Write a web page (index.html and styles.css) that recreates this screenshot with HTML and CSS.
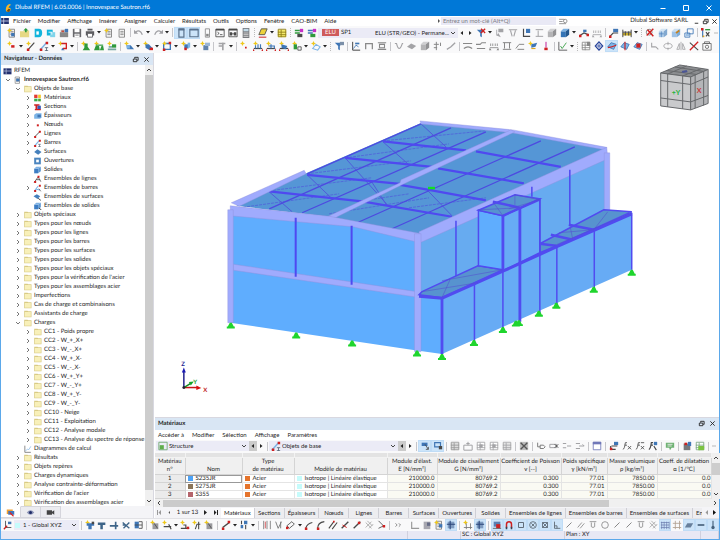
FILE: index.html
```
<!DOCTYPE html>
<html lang="fr">
<head>
<meta charset="utf-8">
<meta name="viewport" content="width=device-width, initial-scale=1">
<title>Dlubal RFEM | 6.05.0006 | Innovespace Sautron.rf6</title>
<link rel="stylesheet" href="styles.css">
</head>
<body>
<div class="app">
  <header class="titlebar">
    <svg class="logo" viewBox="0 0 10 12"><path d="M6 0Q1 3 1 8a3.500 3.500 0 0 0 3.500 4Q8 12 8.500 8 8 5 5 6 5 3 9 1z" fill="#f5b62b"/><path d="M5 7l3 1-2 4-4-1z" fill="#7a4a12"/></svg>
    <span class="title">Dlubal RFEM | 6.05.0006 | Innovespace Sautron.rf6</span>
    <button class="win" aria-label="Réduire"><svg viewBox="0 0 8 8"><path d="M1.500 4.500h5"/></svg></button>
    <button class="win" aria-label="Agrandir"><svg viewBox="0 0 8 8"><path d="M1.500 1.500h5v5h-5z"/></svg></button>
    <button class="win" aria-label="Fermer"><svg viewBox="0 0 8 8"><path d="M1.500 1.500l5 5m0-5l-5 5"/></svg></button>
  </header>

  <nav class="menubar">
    <svg class="app-icon" viewBox="0 0 9 7"><path d="M0 0h9v7H0z" fill="#23306f"/><path d="M0 3.500h9M3 0v7" stroke="#c8cfe8"/></svg>
    <button>Fichier</button><button>Modifier</button><button>Affichage</button><button>Insérer</button><button>Assigner</button><button>Calculer</button><button>Résultats</button><button>Outils</button><button>Options</button><button>Fenêtre</button><button>CAO-BIM</button><button>Aide</button>
    <span class="grow3"></span>
    <svg class="tiny" viewBox="0 0 4 4"><path d="M1 0l2 2-2 2z" fill="#555"/></svg>
    <input class="search" type="text" placeholder="Entrez un mot-clé (Alt+Q)" aria-label="Entrez un mot-clé">
    <svg class="find" viewBox="0 0 10 8"><path d="M0 1.500h6M0 4h4M0 6.500h8" stroke="#888" fill="none"/><circle cx="7" cy="3.500" r="2" stroke="#888" fill="none"/></svg>
    <span class="grow2"></span>
    <span class="company">Dlubal Software SARL</span>
    <button class="mdi" aria-label="Réduire la vue"><svg viewBox="0 0 8 8"><path d="M2 6h4"/></svg></button>
    <button class="mdi" aria-label="Restaurer la vue"><svg viewBox="0 0 8 8"><path d="M1.500 3.500h4v3h-4zM3 3V1.500h4V5H6"/></svg></button>
    <button class="mdi" aria-label="Fermer la vue"><svg viewBox="0 0 8 8"><path d="M1.500 1.500l5 5m0-5l-5 5"/></svg></button>
  </nav>

  <div class="bar" role="toolbar">
    <span class="tools" data-tools="new open logo cloud box save print v report doc | undo v redo v | *panel *panelw panelg console manager calc : para v sheet : loadA loadB"></span>
    <span class="combo case"><b class="badge">ELU</b><span class="sp">SP1</span><select aria-label="Situation de projet"><option>ELU (STR/GEO) - Permane...</option></select><svg class="chev" viewBox="0 0 6 4"><path d="M1 1l2 2 2-2"/></svg></span>
    <span class="tools" data-tools="<prev <next filterx v loadg barsg axisb loadp cubeg cubeb v rail spang | railb gauge v : zoomx ghost hand cubes | axes <more"></span>
  </div>
  <div class="bar second" role="toolbar">
    <span class="tools" data-tools="node v line member v frame v | support supports springs | surf v solid v opening v cut v block | pillar v | starred memA memB memC nodeL v plane v : filter | graph portal matrix | curve meshg cubeg arrowsg slopeg | wave wave2 span1 span2 span3 starb pin | check v : gridg target *discA discB discC | flipg ring mirrorg crossr cam"></span>
  </div>

  <div class="work">
    <aside class="navigator">
      <div class="pane-title"><span>Navigateur - Données</span>
        <button class="mdi" aria-label="Détacher"><svg viewBox="0 0 8 8"><path d="M1.500 3.500h4v3h-4zM3 3V1.500h4V5H6"/></svg></button>
        <button class="mdi" aria-label="Fermer"><svg viewBox="0 0 8 8"><path d="M1.500 1.500l5 5m0-5l-5 5"/></svg></button>
      </div>
      <div class="tree-wrap">
        <ul class="tree" id="tree"></ul>
        <div class="vscroll"><svg viewBox="0 0 6 4"><path d="M1 3l2-2 2 2"/></svg><i class="thumb"></i><svg viewBox="0 0 6 4"><path d="M1 1l2 2 2-2"/></svg></div>
      </div>
      <div class="nav-tabs">
        <button class="on" aria-label="Données"><svg viewBox="0 0 12 12"><path d="M1 2h8v6H1z" fill="#f0a030"/><path d="M3 4h8v5H3z" fill="#4277bd"/><path d="M5 6l5 5" stroke="#d22" stroke-width="1.500"/></svg></button>
        <button aria-label="Afficher"><svg viewBox="0 0 12 12"><path d="M1 6q5-6 10 0-5 6-10 0z" fill="#8b93b5"/><circle cx="6" cy="6" r="2" fill="#1d2a66"/></svg></button>
        <button aria-label="Vues"><svg viewBox="0 0 12 12"><path d="M1 3h7v6H1zM8 5l3-2v6L8 7z" fill="#444"/></svg></button>
      </div>
    </aside>

    <div class="main">
      <section class="view">
        <svg class="model" viewBox="155 53 565 364">
          <g>
            <path d="M421 240L609 156V232L421 297z" fill="#67abf0"/>
            <path d="M231 212L352 226 421 240V351.500L231 323z" fill="#5fadfe"/>
            <path d="M418 292L443 298V354.500L418 351z" fill="#5fadfe"/>
            <path d="M443 298L504 271 558 247 595 230 633 213V270L443 354.500z" fill="#67abf5"/>
            <path d="M237 206L308 173 422 123 515 132 606 149 421 236 330 217z" fill="#5596d6"/>
          </g>
          <g stroke="#4f4cdc" stroke-width="1" fill="none" opacity=".8">
            <path d="M270 192L293 212M308 175L333 199M346 158L390 207M384 142L410 165M422 124L447 147M428 190L453 216M372 181L388 206"/>
            <path d="M240 208L340 194M270 191L372 178M308 174L412 161M346 158L450 144M384 141L486 131M330 214L430 198M410 208L487 198M363 201L410 194" stroke-dasharray="3 1" opacity=".7"/>
          </g>
          <g stroke="#4d4ae0" stroke-width="1.300" fill="none">
            <path d="M270 209L452 128M303 213L487 132M358 223L542 141M393 229L576 147M308 174L422 124"/>
          </g>
          <g stroke="#4f49f0" stroke-width="2.200" fill="none">
            <path d="M270 191.500L363 201.500 453 217M308 175L401 184M401 185L430 190 487 200.500M346 158L438 167.500M439 168.500L525 183.500M384 141.500L467 150.500M477 151.500L562 167"/>
          </g>
          <g fill="#a0abfd" stroke="#8f90dc" stroke-width=".4">
            <path d="M232 203L305 170.500 307 174 240 206.500z"/>
            <path d="M421 121L514 130 608 147.500 606 150 514 133 422 124z"/>
            <path d="M328 217L401 183 402 180 512 130 516 132 405 184 336 218z"/>
            <path d="M231 206L330 216.500 420 233.500 421 243 354 227 231 216z"/>
            <path d="M420 232L608 147.500 609 159 421 243z"/>
            <path d="M234 264.500L418 292V297.500L234 270.500z"/>
            <path d="M228.500 210h5.500V323h-5.500zM415.500 234h6.500V352h-6.500zM605.500 153h5.500V211h-5.500z"/>
          </g>
          <path d="M296.500 218V277M352.500 226V285" stroke="#4f49f0" stroke-width="2"/>
          <path d="M457 221V277M571 170V226M533 187V197" stroke="#4f49f0" stroke-width="1.500"/>
          <g stroke="#514bf0" stroke-width="1.500">
            <path d="M423 292L479 266 504 270 443 298 420 295z" fill="#5793cf"/>
            <path d="M541 244L605 210 633 212 558 246 541 253z" fill="#5793cf"/>
            <path d="M479.500 210.500L504 216V270L479.500 266z" fill="#5fadfe"/>
            <path d="M504 216L541 199V253L504 271z" fill="#67abf5"/>
            <path d="M479.500 210.500L516 195 541 199 504 216z" fill="#5793cf"/>
          </g>
          <g stroke="#514bf0" fill="none">
            <path d="M420 296.500L443 298.500 504 271.500 558 247 633 214" stroke-width="3"/>
            <path d="M443 298V354.500M521 208V322M504 216V271" stroke-width="2.800"/>
            <path d="M475.500 285V344M504 271V331M541 199V315M558 246V306M595.500 231V289M633 213V270" stroke-width="1.500"/>
            <path d="M494 202L521 208M552 235L574 240M541 244L557 246M570 225L595 230M504 216L541 199.500" stroke-width="2.500"/>
          </g>
          <path d="M451 280L443 298M443 281L504 270M423 292L479 283M480 210L521 208M494 202L504 216M516 195L541 200M516 195V205M510 209L541 200M571 225L574 240M555 246L633 213M595 230L609 212M560 233L595 230" stroke="#5350d0" stroke-width=".7" fill="none" opacity=".8"/>
          <g id="supports" fill="#1fd52d"></g>
          <path d="M429 187h7v2.500h-7z" fill="#12e020"/>
          <path d="M184.500 388V372" stroke="#23238c" stroke-width="1.500"/><path d="M182.500 373l2-5 2 5z" fill="#1a1ab4"/>
          <path d="M184.500 388H199" stroke="#c81414" stroke-width="1.500"/><path d="M197 386l5 2.500-5 2z" fill="#d81010"/>
          <path d="M184.500 388L191 384" stroke="#118a22" stroke-width="1.500"/><path d="M189.500 382.500l5-.500-3 4z" fill="#14a52a"/>
          <circle cx="184.500" cy="388" r="1.500" fill="#223"/>
          <g class="axis-text"><text x="182" y="366" fill="#1c1c90">Z</text><text x="204" y="392" fill="#c01818">X</text><text x="194" y="384" fill="#18a030">Y</text></g>
          <g stroke="#66686b" stroke-width="1">
            <path d="M662 73L681 65 709.500 69.500 692 77z" fill="#8b8d90"/>
            <path d="M662 73L692 77V110L662 106z" fill="#c9cacc"/>
            <path d="M692 77L709.500 69.500V103.500L692 110z" fill="#b4b5b8"/>
            <path d="M669 74V107M684 76V109M662 80.500L692 84.500 709.500 77M662 98L692 102 709.500 95.500M696.500 75V108M705 71.500V105.500M668 70.500L698 74.500M676 67L705 71.500M669 74L688 66M684 76L703 68.500" fill="none"/>
          </g>
          <g class="cube-text"><text x="673" y="95" fill="#22b43a">+Y</text><text x="698" y="93" fill="#c83a3a">X</text></g>
          <path d="M683 71l5-1 1 2-5 1z" fill="#4b5596"/>
        </svg>
      </section>

      <section class="panel">
        <div class="pane-title"><span>Matériaux</span>
          <button class="mdi" aria-label="Détacher"><svg viewBox="0 0 8 8"><path d="M1.500 3.500h4v3h-4zM3 3V1.500h4V5H6"/></svg></button>
          <button class="mdi" aria-label="Fermer"><svg viewBox="0 0 8 8"><path d="M1.500 1.500l5 5m0-5l-5 5"/></svg></button>
        </div>
        <div class="panel-menu"><button>Accéder à</button><button>Modifier</button><button>Sélection</button><button>Affichage</button><button>Paramètres</button></div>
        <div class="bar panel-bar" role="toolbar">
          <span class="combo structure"><span class="ico" data-icon="green"></span><select aria-label="Catégorie"><option>Structure</option></select><svg class="chev" viewBox="0 0 6 4"><path d="M1 1l2 2 2-2"/></svg></span>
          <span class="tools" data-tools="#prev <next |"></span>
          <span class="combo objects"><span class="ico" data-icon="member"></span><select aria-label="Type d'objet"><option>Objets de base</option></select><svg class="chev" viewBox="0 0 6 4"><path d="M1 1l2 2 2-2"/></svg></span>
          <span class="tools" data-tools="#prev <next | *selA *selB | rowg rowup tabgr tabgr tabgl | delg | tagg delrow insg outg | tabb | exch fx fxx fxp | bubble | binder excel | <more"></span>
        </div>
        <div class="grid-wrap">
          <table>
            <colgroup><col class="c30"><col class="c57"><col class="c52"><col class="c93"><col class="c50"><col class="c63"><col class="c61"><col class="c46"><col class="c50"><col class="c54"></colgroup>
            <thead>
              <tr class="strip"><td></td><td></td><td></td><td></td><td></td><td></td><td></td><td></td><td></td><td></td></tr>
              <tr><th>Matériau<br>n°</th><th><br>Nom</th><th>Type<br>de matériau</th><th><br>Modèle de matériau</th><th>Module d'élast.<br>E [N/mm²]</th><th>Module de cisaillement<br>G [N/mm²]</th><th>Coefficient de Poisson<br>v [--]</th><th>Poids spécifique<br>γ [kN/m³]</th><th>Masse volumique<br>ρ [kg/m³]</th><th>Coeff. de dilatation<br>α [1/°C]</th></tr>
            </thead>
            <tbody>
              <tr><th>1</th><td class="sel"><i class="sw blue"></i>S235JR</td><td><i class="sw orange"></i>Acier</td><td><i class="sw cyan"></i>Isotrope | Linéaire élastique</td><td>210000.0</td><td>80769.2</td><td>0.300</td><td>77.01</td><td>7850.00</td><td class="cutoff">0.0</td></tr>
              <tr><th>2</th><td><i class="sw brown"></i>S275JR</td><td><i class="sw orange"></i>Acier</td><td><i class="sw cyan"></i>Isotrope | Linéaire élastique</td><td>210000.0</td><td>80769.2</td><td>0.300</td><td>77.01</td><td>7850.00</td><td class="cutoff">0.0</td></tr>
              <tr><th>3</th><td><i class="sw rose"></i>S355</td><td><i class="sw orange"></i>Acier</td><td><i class="sw cyan"></i>Isotrope | Linéaire élastique</td><td>210000.0</td><td>80769.2</td><td>0.300</td><td>77.01</td><td>7850.00</td><td class="cutoff">0.0</td></tr>
            </tbody>
          </table>
          <div class="vscroll short"><svg viewBox="0 0 6 4"><path d="M1 3l2-2 2 2"/></svg><i class="thumb"></i><svg viewBox="0 0 6 4"><path d="M1 1l2 2 2-2"/></svg></div>
        </div>
        <div class="hscroll"><svg viewBox="0 0 4 6"><path d="M3 1L1 3l2 2"/></svg><i class="thumb"></i><i class="rest"></i><svg viewBox="0 0 4 6"><path d="M1 1l2 2-2 2"/></svg></div>
        <div class="tabs">
          <span class="pager"><button aria-label="Premier"><svg viewBox="0 0 5 5"><path d="M1 0v5H0V0zM4 0v5L1.500 2.500z" fill="#999"/></svg></button><button aria-label="Précédent"><svg viewBox="0 0 5 5"><path d="M3 1v3L1.500 2.500z" fill="#555"/></svg></button><span>1 sur 13</span><button aria-label="Suivant"><svg viewBox="0 0 5 5"><path d="M1 0v5l3-2.500z" fill="#222"/></svg></button><button aria-label="Dernier"><svg viewBox="0 0 5 5"><path d="M4 0v5h1V0zM1 0v5l2.500-2.500z" fill="#222"/></svg></button></span>
          <div class="tablist"><button class="on">Matériaux</button><button>Sections</button><button>Épaisseurs</button><button>Nœuds</button><button>Lignes</button><button>Barres</button><button>Surfaces</button><button>Ouvertures</button><button>Solides</button><button>Ensembles de lignes</button><button>Ensembles de barres</button><button>Ensembles de surfaces</button><button>Ensembles de solides</button></div>
          <span class="tab-arrows"><button aria-label="Onglets précédents"><svg viewBox="0 0 5 5"><path d="M4 0v5L1.500 2.500z" fill="#999"/></svg></button><button aria-label="Onglets suivants"><svg viewBox="0 0 5 5"><path d="M1 0v5l3-2.500z" fill="#111"/></svg></button></span>
        </div>
      </section>
    </div>
  </div>

  <div class="bar bottom" role="toolbar">
    <span class="tools" data-tools="csys"></span>
    <span class="combo global"><i class="sw cyan"></i><select aria-label="Système de coordonnées"><option>1 - Global XYZ</option></select><svg class="chev" viewBox="0 0 6 4"><path d="M1 1l2 2 2-2"/></svg></span>
    <span class="tools narrow" data-tools="| wpA wpB wpC wpD wpE | wpF dimA v dimB dimC wpF | dash v sortb v | bars3 curve2 para2 v slash arc dbl slash2 slash3 hatchg angle | more gap angleg pageg pager *eyeb | stargrid *eyeb | *mag *magnet *sq *circ *xsq *perp slashg dblg cupg ringg slashg slashg cupg hatchg *grid hash *planeb *dashb *tempb"></span>
  </div>
  <footer class="status"><span class="s1"></span><span class="s2"></span><span class="s3">SC : Global XYZ</span><span class="s4">Plan : XY</span><span class="s5"></span></footer>
</div>
<script src="app.js"></script>
</body>
</html>
```
FILE: styles.css
```
* { box-sizing: border-box; }
html, body { margin: 0; height: 100%; }
body {
  font-family: Lato, "Open Sans", sans-serif;
  font-size: 6px;
  line-height: 8px;
  color: #262626;
  text-rendering: geometricPrecision;
  overflow: hidden;
}
button, input, select { font: inherit; color: inherit; border: 0; margin: 0; padding: 0; background: none; border-radius: 0; }
button { display: inline-flex; align-items: center; justify-content: center; white-space: nowrap; }
svg { display: block; }

.app {
  min-height: 100vh;
  height: 100%;
  display: flex;
  flex-direction: column;
  background: #f9f9fa;
  border: 1px solid #5ba8ea;
  border-top: 0;
}

.titlebar { flex: none; height: 16px; margin: 0 -1px; display: flex; align-items: center; background: #0078d7; color: #fff; }
.titlebar .logo { width: 7px; height: 8px; margin: 0 3px 0 5px; }
.titlebar .title { flex: 1; }
.win { width: 23px; height: 16px; }
.win svg { width: 8px; height: 8px; }
.win path { stroke: #fff; stroke-width: 1; fill: none; }

.menubar { flex: none; height: 10px; display: flex; align-items: center; background: #fff; }
.menubar > button { margin-right: 7px; }
.app-icon { width: 8px; height: 6px; margin-right: 4px; }
.grow3 { flex: 3; }
.grow2 { flex: 2; }
.tiny { width: 4px; height: 4px; }
.search { flex: 0 1 115px; min-width: 0; height: 8px; background: #e9e9f5; padding-left: 2px; }
.search::placeholder { color: #7d7d86; opacity: 1; }
.find { width: 9px; height: 7px; margin-left: 3px; }
.company { margin-right: 4px; }
.menubar > .mdi { margin: 0; }
.mdi { width: 9px; height: 8px; }
.mdi svg { width: 7px; height: 7px; }
.mdi path { stroke: #222; stroke-width: 1; fill: none; }

.bar { flex: none; height: 13px; display: flex; align-items: center; background: #f9f9fa; overflow: hidden; padding-left: 4px; }
.second { height: 14px; }
.tools { display: flex; align-items: center; flex: none; }
.tool { width: 13px; height: 12px; }
.tool svg, .ico svg { width: 10px; height: 10px; }
.tool.on { background: #cce4f9; box-shadow: inset 0 0 0 1px #bfdcf6; }
.tool.arrow { width: 8px; }
.tool.arrow svg { width: 6px; height: 6px; }
.tool.arrow.grey { background: #cbcbcb; height: 10px; }
.drop { width: 6px; height: 12px; }
.drop svg { width: 4px; height: 3px; }
.sep { width: 4px; height: 9px; background: linear-gradient(#c6c6ca, #c6c6ca) center / 1px 100% no-repeat; }
.sep.grip { background: repeating-linear-gradient(#bbb 0 1px, transparent 1px 2px) center / 1px 100% no-repeat; }
.gap { width: 5px; }
.narrow .tool { width: 12px; }
.narrow .sep { width: 5px; }

.combo { display: flex; align-items: center; height: 10px; background: #ebebf6; flex: none; }
.combo select { appearance: none; flex: 1; min-width: 0; height: 10px; line-height: 10px; }
.chev { width: 6px; height: 4px; margin-right: 2px; flex: none; }
.chev path, .vscroll path, .hscroll path { stroke: #444; stroke-width: 1; fill: none; }
.case { width: 140px; }
.case select { overflow: visible; }
.badge { width: 17px; height: 7px; line-height: 7px; margin-left: 4px; background: #cf5b5b; color: #fff; font-weight: 400; text-align: center; }
.sp { width: 36px; padding-left: 2px; }

.work { flex: 1; min-height: 0; display: flex; background: #fff; }
.navigator { flex: 0 0 153px; display: flex; flex-direction: column; background: #f4f4f7; border-right: 1px solid #d8d8e0; }
.pane-title { flex: none; height: 12px; display: flex; align-items: center; background: #d9e6f4; padding: 0 1px 0 3px; font-weight: 700; }
.pane-title span { flex: 1; }
.pane-title .mdi { width: 11px; }
.tree-wrap { flex: 1; min-height: 0; display: flex; background: #fff; }
.tree { flex: 1; min-width: 0; margin: 0; padding: 1px 0 0; list-style: none; overflow: hidden; }
.tree li { height: 9px; line-height: 9px; display: flex; align-items: center; white-space: nowrap; }
.tree .chevron { width: 11px; height: 9px; display: flex; align-items: center; justify-content: center; flex: none; }
.tree .chevron svg { width: 6px; height: 6px; }
.tree .chevron path { stroke: #777; stroke-width: 1; fill: none; }
.tree .icon { width: 9px; height: 8px; margin-right: 2px; flex: none; }
.tree .lv0 { padding-left: 1px; }
.tree .lv1 { padding-left: 11px; }
.tree .lv2 { padding-left: 21px; }
.tree .root { padding-left: 2px; }
.tree .strong { font-weight: 700; }

.vscroll { flex: 0 0 8px; display: flex; flex-direction: column; align-items: center; background: #f0f0f0; }
.vscroll svg { width: 6px; height: 4px; margin: 3px 0; flex: none; }
.vscroll .thumb { width: 8px; flex: 0 1 94%; background: #cdcdcd; margin-bottom: auto; }
.nav-tabs { flex: none; height: 12px; display: flex; background: #f4f4f7; }
.nav-tabs button { width: 20px; border: 1px solid #d5d5dc; border-width: 1px 1px 1px 0; background: #ececf0; }
.nav-tabs .on { background: #fff; border-top-color: #fff; }
.nav-tabs svg { width: 9px; height: 9px; }

.main { flex: 1; min-width: 0; display: flex; flex-direction: column; }
.view { flex: 1; min-height: 0; background: #fff; }
.model { width: 100%; height: 100%; }
.axis-text { font-size: 6px; font-weight: 700; }
.cube-text { font-size: 7px; font-weight: 700; }

.panel { flex: none; margin-left: 1px; border-top: 1px solid #d8d8e0; background: #f9f9fa; }
.panel-menu { height: 10px; display: flex; align-items: center; gap: 8px; padding-left: 3px; background: #fff; }
.panel-bar { padding-left: 1px; }
.structure { width: 93px; }
.objects { width: 129px; }
.ico { width: 13px; display: flex; justify-content: center; }
.grid-wrap { display: flex; }
table { flex: 1; width: 100%; table-layout: fixed; border-collapse: collapse; background: #fff; }
td, th { padding: 0 2px; border: 1px solid #e4e4e4; border-width: 0 1px 1px 0; white-space: nowrap; overflow: hidden; font-weight: 400; line-height: 7px; height: 8px; }
th { background: #f0f0f0; border-color: #d4d4d4; text-align: center; padding: 0; }
thead th { line-height: 8px; height: 17px; padding: 0; }
.strip td { height: 5px; line-height: 4px; background: #e3e3e3; border-color: #f2f2f2; }
tbody th { background: #ebebeb; }
tbody td:nth-child(n+5) { text-align: right; background: #fafaf3; }
tbody .cutoff { padding-right: 0; }
tbody .sel { outline: 1px solid #999; outline-offset: -1px; }
.c30 { width: 30px; } .c46 { width: 46px; } .c50 { width: 50px; } .c52 { width: 52px; } .c54 { width: 54px; }
.c57 { width: 57px; } .c61 { width: 61px; } .c63 { width: 63px; } .c93 { width: 93px; }
.sw { display: inline-block; width: 5px; height: 5px; margin-right: 3px; vertical-align: -1px; }
.sw.blue { background: #4da3f7; }
.sw.brown { background: #8b7559; }
.sw.rose { background: #b4646b; }
.sw.orange { background: #e5742c; }
.sw.cyan { background: #c6fbfb; }
.short .thumb { height: 12px; flex: none; }
.hscroll { height: 8px; display: flex; align-items: center; background: #f0f0f0; }
.hscroll svg { width: 4px; height: 6px; margin: 0 2px; flex: none; }
.hscroll .thumb { flex: 440; height: 7px; background: #cbcbcb; }
.hscroll .rest { flex: 101; }
.tabs { height: 11px; display: flex; align-items: center; background: #f4f4f7; }
.pager { flex: 0 0 66px; display: flex; align-items: center; justify-content: space-between; padding: 0 3px 0 2px; }
.pager svg, .tab-arrows svg { width: 5px; height: 5px; }
.tablist { flex: 1; min-width: 0; display: flex; overflow: hidden; }
.tablist button { flex: none; min-width: 30px; height: 10px; padding: 0 3px; border-right: 1px solid #cfcfd6; background: #ededf0; }
.tablist .on { background: #fff; }
.tab-arrows { flex: none; display: flex; gap: 3px; padding: 0 2px; }

.bottom { height: 13px; padding-left: 0; border-top: 1px solid #e2e2e6; }
.global { width: 65px; }
.global .sw { margin: 0 3px 0 1px; }
.status { flex: none; height: 8px; line-height: 7px; display: flex; background: #e8e8f4; }
.status span { border-right: 1px solid #d0d0de; padding-left: 1px; }
.s1 { flex: 0 0 407px; }
.s2 { flex: 0 0 53px; }
.s3 { flex: 0 0 104px; }
.s4 { flex: 1; }
.s5 { flex: 0 0 18px; }
```
FILE: app.js
```
const line = (c, d, w = 1.4) => `<path d="${d}" stroke="${c}" stroke-width="${w}" fill="none"/>`;
const fill = (c, d) => `<path d="${d}" fill="${c}"/>`;
const star = fill("#eec81c", "M3 0l1 2 2 1-2 1-1 2-1-2-2-1 2-1z");
const G = "#a3a3a6", D = "#484848", B = "#3f76b5", LB = "#7db4e6", R = "#cf2020", GR = "#2f9a3c", Y = "#ecd23c", C = "#12b4dc";

const page = (c) => fill("#fff", "M2 1h7v10H2z") + line(c, "M2.500 1.500h6.500v9.500H2.500zM4 4h4M4 6h4M4 8h4", 1);
const win = (c, f) => fill(f, "M1 2h10v8H1z") + line(c, "M1.500 1.500h9v9h-9z", 1) + fill(c, "M1 1h10v3H1z");
const slash = (c) => line(c, "M2 10L10 2", 1.6);
const cube = (a, b, c) => fill(a, "M1 4h6v7H1z") + fill(b, "M1 4l3-3h7L7 4z") + fill(c, "M7 4l4-3v7l-4 3z");
const dots = (c) => fill(c, "M1 9h3v3H1zM8 1h3v3H8z");
const span = (c) => line(c, "M1 8h10M2 3v3M4.500 3v3M7.500 3v3M10 3v3", 1) + fill(c, "M1 8l2 3H0zM11 8l1 3H9z");
const beam = line(D, "M1 9h10", 1.5) + fill(R, "M0 9l2 3H0zM12 9l-2 3h2z");
const wp = (c) => fill(c, "M2 4h9v3H2zM4 7h4v4H4z") + fill(D, "M8 2h3v3H8z");
const tableIcon = (c, f = "#fff") => fill(f, "M1 2h10v9H1z") + line(c, "M1.500 1.500h9v9h-9zM1 5h10M1 8h10M5 2v9", 1);
const funnel = (c) => fill(c, "M1 2h9L7 6v5L5 10V6z");
const disc = (x) => fill(LB, "M1 7l4-5 6 2-3 6z") + line(B, "M1 7l4-5 6 2-3 6z", 1) + x;

const icons = {
  new: page("#777") + star + fill(B, "M5 6h4v4H5z"),
  open: fill("#e6d884", "M0 4h5l1-1h5v8H0z") + fill(GR, "M7 0l3 3H8v2H6V3H4z"),
  logo: fill(C, "M2 1h5q4 0 4 5t-4 5H2z") + fill("#fff", "M4 4h3v4H4z"),
  cloud: fill(C, "M1 2h7v7H1z") + fill("#7fd4ea", "M5 5h6v6H5z") + line("#fff", "M3 5h4v3", 1),
  box: fill("#888", "M1 5h10v6H1z") + fill("#b8b8bb", "M2 2h6v3H2z") + fill(B, "M7 1h4v4H7z") + fill("#c84b3a", "M3 3h3v2H3z"),
  save: fill("#68686c", "M1 1h10v10H1z") + fill("#fff", "M3 1h6v4H3zM3 7h6v4H3z") + fill("#68686c", "M4 8h4v1H4z"),
  print: fill("#5c5c60", "M1 4h10v5H1zM3 1h6v2H3z") + fill("#fff", "M3 7h6v3H3z") + line("#5c5c60", "M3 7v4h6V7", 1),
  report: page("#777") + star, doc: page("#777"),
  undo: line("#a0a0a4", "M2 5q5-4 8 3", 1.5) + fill("#a0a0a4", "M0 2v5h5z"),
  redo: line("#a0a0a4", "M10 5q-5-4-8 3", 1.5) + fill("#a0a0a4", "M12 2v5H7z"),
  panel: line("#59718c", "M3.500 1h6v10h-6z", 1.4) + fill("#59718c", "M3 1h7v2H3z"),
  panelw: line("#59718c", "M1 1.500h10v9H1z", 1.4) + fill("#59718c", "M1 1h10v2H1z"),
  panelg: line("#888", "M4 1h5v10H4z", 1) + fill("#888", "M5 7h3v3H5z"),
  console: line(D, "M1 1.500h10v9H1zM3 5l2 1.500L3 8M6 8h3", 1) + fill(D, "M1 1h10v2H1z"),
  manager: line(D, "M1 1.500h10v9H1zM3 7h6", 1) + fill(D, "M1 1h10v2H1zM2 5h3v4H2zM7 5h3v4H7z"),
  calc: fill("#77797e", "M2 0h8v12H2z") + fill("#c2dbe8", "M3 1h6v3H3z") + line("#ddd", "M3 6h6M3 8h6M3 10h6", 1),
  para: fill(Y, "M4 1h7L8 8H1z") + line(D, "M4 1h7L8 8H1z", 1) + line(R, "M1 11h9", 1.2),
  sheet: tableIcon("#8a7a14", "#f4ea6a"),
  loadA: line(GR, "M1 3h6M1 6h6", 2) + fill("#c62fc8", "M7 1h4v4H7z") + fill(D, "M4 7h6v4H4z"),
  loadB: line(B, "M1 3h6M1 6h6", 2) + fill("#c62fc8", "M7 1h4v4H7z") + fill(GR, "M4 7h6v4H4z"),
  prev: fill("#222", "M8 2v8L3 6z"), next: fill("#222", "M4 2v8l5-4z"),
  filterx: funnel(B) + line(R, "M6 1l5 5m0-5L6 6", 1.6), filter: funnel(B) + fill("#7b8fa8", "M7 1h5v4H7z"),
  loadg: fill(G, "M4 1h6v4H4zM4 6l3 5-5-2z") + line(G, "M2 2v7", 1),
  barsg: line(G, "M1 2h10M3 3l2 7M9 3L7 10", 1.3), axisb: line(D, "M3 1v9h8", 1.4) + fill(B, "M6 1h5v5H6z"),
  loadp: line(G, "M2 2h9M5 3v7M2 10h9", 1.2), cubeg: cube("#b4b4b6", "#d0d0d2", "#929294"), cubeb: cube("#3474b6", "#7db2e2", "#24588e"),
  rail: line(D, "M1 9l5-3 5 2", 1.6) + fill(R, "M0 8h3v3H0zM9 7h3v3H9z") + fill(B, "M5 2h4v3H5z"),
  spang: span(G), railb: fill(B, "M5 1h6v4H5z") + line(D, "M1 10l4-4h6", 1.4) + fill(R, "M0 9h3v3H0z"),
  gauge: fill("#c8ad28", "M1 6h10v3H1z") + line(D, "M1 2v9M11 2v9M4 4v5M8 4v5M1 5h10", 1.2),
  zoomx: `<circle cx="5" cy="5" r="3.500" stroke="#777" fill="none"/>` + line(R, "M2 9l8-8M3 2l7 8", 1.7),
  ghost: cube("#a9c8e6", "#d5e5f3", "#83a9d0") + line(B, "M4 4v7M1 7h6", .7), hand: cube("#9ec2e6", "#cadff2", "#7faedb") + line("#c68322", "M6 6l4-3", 2),
  cubes: line(B, "M4 1h7v6H4zM1 6h6v5H1z", 1) + fill("#9bbfe4", "M2 7h4v3H2z"),
  axes: line(B, "M2 1v10") + line("#e2a422", "M2 10h2", 2) + line(GR, "M5 2h6", 1.6) + line(D, "M6 5l4 5m0-5l-4 5", 1.4) + fill(R, "M0 0h3v3H0z"),
  more: line("#777", "M3 4l2 2-2 2M7 4l2 2-2 2", 1),
  node: star + fill(R, "M5 5h4v3H5z"), line: star + line(D, "M2 11L10 2") + fill(R, "M1 9h3v3H1z"),
  member: line(LB, "M1 11L9 2", 1.8) + dots(R) + line("#567", "M7 8h4M9 8v4M7 11.500h4", 1), frame: star + line(R, "M4 3h6v6H6", 1.6) + fill(B, "M5 8l3 3H4z"),
  support: star + fill(GR, "M4 3h4v4l3 4H2l2-3z"), supports: star + fill(GR, "M2 6h4l1 5H0zM9 6h2l1 5H7z") + line(GR, "M2 5h9"),
  springs: star + fill(GR, "M6 4h5v4H6z") + line("#76a7a0", "M1 10h10M2 7h4", 2),
  surf: star + fill(B, "M3 5h5l4 5H4z") + fill(LB, "M3 5h4v4H3z"), solid: star + fill(B, "M3 4h4l4 4-3 3-5-3z") + fill(R, "M8 8h4v3H8z"),
  opening: line(B, "M2 3h8v7H2z", 1.6) + dots(R) + star, cut: star + fill(B, "M4 4h5v5H4z") + fill(R, "M4 8h3v3H4z") + fill(LB, "M8 2h3v6H8z"),
  block: star + fill("#6283ab", "M4 5h6v6H4z") + fill("#9bb5d4", "M6 2h6v4H6z"),
  pillar: line(G, "M7 2v9", 2) + fill(G, "M2 2h8v2H2zM2 5h4v2H2z"),
  starred: star + fill(R, "M6 7h2v2H6z"), memA: star + beam + line(B, "M3 5v4M6 4v5M9 4v5"), memB: star + beam + line(B, "M3 6h7v3M6 4v5"), memC: star + beam + fill(B, "M3 4l7 2-2 4-5-2z"),
  nodeL: star + fill(GR, "M2 4h4v6H2z") + line(D, "M7 7h4v4H7z", 1), plane: star + line(LB, "M2 9l4-5 5 3-3 4z", 1.3),
  graph: line(D, "M2 1v10h9", 1.2) + fill(B, "M5 2h5v2H5z") + line(B, "M3 9l3-4 3 2", 1), portal: line("#888", "M2 10V3h8v7", 1.5),
  matrix: line("#888", "M1 2h10M1 10h10M3 4h6v4H3z", 1.3), curve: line(G, "M1 3h2q3 12 7 0h1", 1.3), meshg: fill(G, "M0 7l5-4 6 3-5 4z"),
  arrowsg: line("#888", "M4 1v10M1 4h6M1 8h4M9 2v4", 1.2), slopeg: line(G, "M1 10l5-3 5-5", 1.6),
  wave: line("#888", "M0 3h11M1 9q5-4 10 0", 1.3), wave2: line("#888", "M0 4h5l2-2h5M1 9h10", 1.3), span1: span("#888"), span2: line("#888", "M1 2h10M3 2v7M9 2v7M1 10h10", 1.2), span3: line("#888", "M1 9l4-5h6M3 10h8", 1.2),
  starb: star + fill(B, "M4 4l7-2-2 5-5 1z") + line("#e0a922", "M4 9h5"), pin: line("#c0209a", "M6 1v7", 1.2) + fill(R, "M4 8h4v3H4z"),
  check: line(D, "M1 1v10h10", 1) + line(GR, "M3 6l2 3 5-7", 1), gridg: tableIcon("#888") + fill("#888", "M7 1h4v5H7z"),
  target: line("#27449b", "M6 1l4.500 5L6 11 1.500 6z") + line("#27449b", "M6 3v6M3 6h6", 1),
  discA: disc(line(R, "M1 8q5-1 10-3", 1.4)), discB: disc(line(R, "M6 1v10")), discC: disc(fill(R, "M4 3h5v5H4z")),
  flipg: line(G, "M2 2v5h5M7 7l3 3", 1.3), ring: `<ellipse cx="6" cy="6" rx="5" ry="3" stroke="${G}" fill="none"/>` + line(G, "M6 1v4M6 8v3", 1),
  mirrorg: line(G, "M6 1v10M4 3v7H1zM8 3v7h3z", 1), crossr: line(D, "M1 2l10 9", 1.3) + line(R, "M11 1L1 11", 1.6), cam: line("#666", "M1 3h10v8H1zM3 1h6v2H3z", 1) + `<circle cx="6" cy="7" r="2" stroke="#666" fill="none"/>`,
  green: line("#6aa66a", "M1 1.500h10v9H1z", 1) + fill("#5fae4c", "M2 5h5v5H2z"), 
  selA: fill(B, "M2 2h7v4H2z") + line(D, "M6 4l4 6M7 10h3V7", 1), selB: line(B, "M2 2h7v5H2z") + fill(D, "M7 6h4v4H7z"),
  rowg: tableIcon("#999", "#ddd"), rowup: line(G, "M1 5h10v6H1zM6 5V1M4 3h4", 1.2), tabgr: tableIcon(G) + fill(G, "M4 4h4v4H4z"), tabgl: tableIcon(G, "#e4e4e4"),
  delg: fill("#bbb", "M1 1h10v10H1z") + line("#555", "M2 2l8 8m0-8l-8 8", 1.6), tagg: line("#666", "M2 2v5h3M5 5h4l2 2-2 2H5z", 1),
  delrow: line(G, "M1 4h8v4H1z", 1.2) + line(D, "M7 4l4 4m0-4L7 8", 1.2), insg: line(G, "M1 3h4M1 8h4M6 6h5", 1.3), outg: line(G, "M1 3h5M1 9h5M5 6h6l-2-2", 1.2),
  tabb: win("#7077b8", "#fff"), exch: fill(B, "M6 1h5v4H6z") + line(D, "M2 6v4h6M3 6h7", 1.4) + fill(R, "M1 8h3v3H1z"),
  fx: line(D, "M1 10q2 0 3-8h2M3 5h3M7 6l4 4m0-4l-4 4", 1), fxx: line(D, "M1 10q2 0 3-8h2M3 5h3M7 6l4 4m0-4l-4 4M7 2h4", 1), fxp: line(D, "M1 10q2 0 3-8h2M3 5h3M7 6l3 5", 1.4) + fill(B, "M7 1h4v4H7z"),
  bubble: fill("#6fb274", "M1 2h10v6H8l-2 3-1-3H1z") + line("#eee", "M3 4h6M3 6h5", 1), binder: fill("#77797d", "M2 3h8v8H2z") + fill(B, "M7 1h4v5H7z") + fill(R, "M3 2h3v3H3z"),
  excel: tableIcon("#78a27e") + fill("#7cc342", "M4 6h7v5H4z"),
  csys: line(D, "M3 1v8h7", 1) + fill(B, "M6 2h4v3H6z") + line(R, "M1 11l4-4", 1.6),
  wpA: star + wp(B), wpB: fill("#3e6588", "M1 3h9v3H1zM4 6h3v5H4z"), wpC: line("#3e6588", "M1 7h10M8 2v9", 2), wpD: line("#3e6588", "M2 3l8 7M10 3L3 10M2 6h3", 1.6), wpE: fill(B, "M2 2h5v8H2z") + line(D, "M7 2h4v8H7M2 6h9", 1), wpF: star + fill("#9a9a9e", "M3 4h7v7H3z") + line(D, "M5 4l4 6", 1),
  dimA: star + line(D, "M2 8h9M8 5l3 6"), dimB: star + line(D, "M1 10h10M4 6h3v4") + fill(R, "M8 8h3v3H8z"), dimC: star + line(D, "M4 11l2-6h4M8 2v9", 1.3),
  dash: line(D, "M2 9l8-6", 1.8) + dots(R), sortb: fill(B, "M6 1h4v4H6zM2 6h3v4H2z") + line(D, "M8 6v5M3 1v4", 1.3),
  bars3: line("#777", "M2 1v10M6 1v10M10 1v10", 1) + line(R, "M4 2v8", .8), curve2: line("#777", "M2 2l3 8 4-8M8 2v8", 1.1), para2: line(D, "M1 7l6-5 3 3-6 5z", 1) + fill(R, "M0 8h3v3H0z"),
  slash: line(D, "M2 10q2-6 8-7") + fill(R, "M1 9h3v3H1z"), arc: line(D, "M2 10q0-7 8-8") + fill(R, "M1 9h3v3H1z"), dbl: line(D, "M1 10l6-8M5 11l6-8", 1.3) + fill(R, "M6 1h2v2H6z"),
  slash2: slash(D) + line(R, "M3 6l5 3", 1.2), slash3: slash(D) + fill(R, "M7 2h3v3H7z"), hatchg: line("#999", "M2 3l7 7M4 1l6 6M9 2l-7 7M11 5l-5 5", .9), angle: line(D, "M3 1l6 6-6 3", 1) + fill(R, "M8 6h3v3H8z"),
  angleg: line("#999", "M2 2v8h9"), pageg: fill("#a7a7b0", "M2 2h8v9H2z") + fill("#666c86", "M6 3h4v4H6z"), pager: page("#777") + star + fill(B, "M6 5h4v4H6z"),
  eyeb: fill("#7e9bc0", "M2 2h8v8H2z") + line("#2b457a", "M1 5h10M5 1v10", 1.3), stargrid: star + line("#777", "M1 9h10M4 4v7M9 4v7", 1), 
  mag: fill("#5b7fb0", "M2 2h8v6H2z") + fill(R, "M5 5h5v5H5z") + line("#555", "M1 10h10", 1), magnet: line(R, "M3 10V5a3 3 0 0 1 6 0v5", 1.8) + line("#345", "M3 8v3M9 8v3", 1.8),
  sq: line("#58636e", "M3 3h6v6H3z", 1.1), circ: `<circle cx="6" cy="6" r="4" stroke="#58636e" fill="none"/>` + line("#58636e", "M4 4l4 4m0-4L4 8", 1), xsq: line("#58636e", "M3 3h6v6H3zM3 3l6 6m0-6L3 9", 1), perp: line("#58636e", "M3 2v8h7M3 7h3v3", 1),
  slashg: line("#888", "M3 9l6-6", 1.2), dblg: line("#888", "M2 9l5-6M5 10l5-6", 1), cupg: line("#888", "M2 2h8M4 3v5q2 2 4 0V3", 1), ringg: `<circle cx="6" cy="6" r="4" stroke="#888" fill="none"/>`,
  grid: line("#67a", "M2 2v9M5 2v9M8 2v9M11 2v9M1 3h10M1 6h10M1 9h10", .8), hash: line("#b0a090", "M4 1v10M9 1v10M1 4h10M1 9h10", 1), planeb: fill("#67809c", "M4 4h7L8 9H1z"), dashb: line("#47627c", "M2 6h8", 2), tempb: line("#47627c", "M6 1v7", 1.4) + `<circle cx="6" cy="9" r="2" fill="#47627c"/>`
};

const svg = (name) => `<svg viewBox="0 0 12 12">${icons[name] || ""}</svg>`;

document.querySelectorAll("[data-tools]").forEach((bar) => {
  bar.innerHTML = bar.dataset.tools.split(" ").map((t) => {
    if (t === "|") return '<span class="sep"></span>';
    if (t === ":") return '<span class="sep grip"></span>';
    if (t === "gap") return '<span class="gap"></span>';
    if (t === "v") return '<button class="drop" aria-label="Menu"><svg viewBox="0 0 4 3"><path d="M0 0h4L2 2.500z" fill="#222"/></svg></button>';
    const mark = "*<#".includes(t[0]) ? t[0] : "";
    const name = mark ? t.slice(1) : t;
    const cls = { "*": "tool on", "<": "tool arrow", "#": "tool arrow grey" }[mark] || "tool";
    return `<button class="${cls}" aria-label="${name}">${svg(name)}</button>`;
  }).join("");
});
document.querySelectorAll("[data-icon]").forEach((el) => { el.innerHTML = svg(el.dataset.icon); });

const tree = {
  folder: fill("#d9cb85", "M1 1h5l1 1h5v9H1z") + fill("#f8f0b9", "M2 3h9v7H2z"),
  rfem: fill("#23306f", "M0 2h12v9H0z") + line("#c8cfe8", "M0 6h12M4 2v9", 1),
  file: page("#777") + fill(B, "M4 4h5v4H4z"),
  mat: fill("#e33a33", "M1 1h5v5H1z") + fill("#f3c524", "M7 1h4v5H7z") + fill("#35b04a", "M1 7h5v4H1z") + fill("#4aa535", "M7 7h4v4H7z"),
  sec: fill(R, "M1 2h8v2H6v5h5v2H2V9h1V4H1z") + fill("#3559ba", "M6 4h5v5H6z"),
  thick: fill(LB, "M1 4l3-2h8v6l-2 2H1z") + fill(B, "M6 4h5v4H6z"), node: fill(R, "M5 5h3v3H5z"),
  line: line(D, "M2 10L10 2") + dots(R), bar: line(LB, "M1 11L9 2", 1.8) + dots(R) + line("#567", "M7 8h4M9 8v4M7 11.500h4", 1),
  surf: fill("#4580bc", "M1 6l5-4 6 4-5 4z"), open: fill("#4b85bf", "M1 1h10v10H1z") + fill("#fff", "M4 4h4v4H4z"), solid: cube("#3d7dc4", "#7fb2e4", "#5d97d2"),
  lines: line(D, "M1 11L7 3l4 7M4 7h6", 1.2) + fill(R, "M6 1h3v3H6zM1 9h3v3H1z"), bars: line(LB, "M1 11L7 3M4 8l6 1", 1.6) + dots(R) + line(D, "M8 7l3 4", 1),
  surfs: fill("#4580bc", "M0 5l5-3 5 3-4 4z") + line(D, "M7 8l4 3", 1.5), solids: cube("#3d7dc4", "#7fb2e4", "#5d97d2") + line(D, "M8 9l4 3", 1.5), diag: line("#555", "M2 1v10h9", 1) + line(LB, "M3 9l3-3 2 1 3-5", 1)
};
const rows = [
  "root||rfem|RFEM", "0|v|file|Innovespace Sautron.rf6", "1|v|folder|Objets de base",
  "2|>|mat|Matériaux", "2|>|sec|Sections", "2|>|thick|Épaisseurs", "2|>|node|Nœuds", "2|>|line|Lignes", "2|>|bar|Barres", "2|>|surf|Surfaces", "2||open|Ouvertures", "2||solid|Solides", "2||lines|Ensembles de lignes", "2|>|bars|Ensembles de barres", "2||surfs|Ensembles de surfaces", "2||solids|Ensembles de solides",
  ...["Objets spéciaux", "Types pour les nœuds", "Types pour les lignes", "Types pour les barres", "Types pour les surfaces", "Types pour les solides", "Types pour les objets spéciaux", "Types pour la vérification de l'acier", "Types pour les assemblages acier", "Imperfections", "Cas de charge et combinaisons", "Assistants de charge"].map((n) => "1|>|folder|" + n),
  "1|v|folder|Charges",
  ...["CC1 - Poids propre", "CC2 - W_+_X+", "CC3 - W_-_X+", "CC4 - W_+_X-", "CC5 - W_-_X-", "CC6 - W_+_Y+", "CC7 - W_-_Y+", "CC8 - W_+_Y-", "CC9 - W_-_Y-", "CC10 - Neige", "CC11 - Exploitation", "CC12 - Analyse modale", "CC13 - Analyse du spectre de réponse"].map((n) => "2|>|folder|" + n),
  "1||diag|Diagrammes de calcul",
  ...["Résultats", "Objets repères", "Charges dynamiques", "Analyse contrainte-déformation", "Vérification de l'acier", "Vérification des assemblages acier"].map((n) => "1|>|folder|" + n)
];
const chevrons = { ">": "M2 1l2 2-2 2", v: "M1 2l2 2 2-2", "": "" };
document.getElementById("tree").innerHTML = rows.map((r) => {
  const [lv, open, icon, label] = r.split("|");
  const chev = lv === "root" ? "" : `<span class="chevron"><svg viewBox="0 0 6 6"><path d="${chevrons[open]}"/></svg></span>`;
  return `<li class="${lv === "root" ? "root" : "lv" + lv}${lv === "0" ? " strong" : ""}">${chev}<svg class="icon" viewBox="0 0 12 12">${tree[icon]}</svg><span>${label}</span></li>`;
}).join("");

const feet = [[231.5, 324], [297, 334], [353, 342], [418, 352], [443, 355.5], [475, 341.5], [504, 328.5], [517, 322], [520, 321.5], [540, 312], [557.5, 304], [595, 288], [633, 271]];
document.getElementById("supports").innerHTML = feet.map(([x, y]) => `<path d="M${x - 1} ${y - 1}h2l2 4h1v2h-8v-2h1z"/>`).join("");
```
